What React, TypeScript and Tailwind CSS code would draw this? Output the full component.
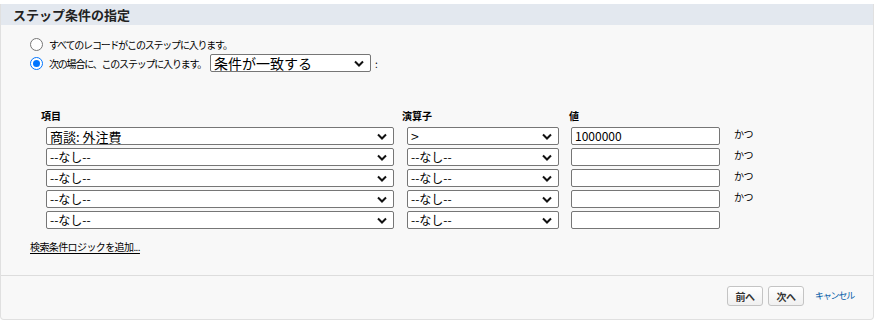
import type { ReactNode } from "react";

const font = { fontFamily: '"Noto Sans CJK JP", "Liberation Sans", sans-serif' };

function Chevron() {
  return (
    <svg width="10" height="7" viewBox="0 0 10 7" className="shrink-0">
      <path d="M1 1.5 L5 5.5 L9 1.5" fill="none" stroke="#111" strokeWidth="2" />
    </svg>
  );
}

function FakeSelect({ value, className, text = "text-[12px]" }: { value: string; className: string; text?: string }) {
  return (
    <div className={`flex items-center justify-between rounded-[2px] border border-[#767676] bg-white pl-[3px] pr-[6px] ${className}`}>
      <span className={`leading-none text-black ${text}`}>{value}</span>
      <Chevron />
    </div>
  );
}

function Radio({ checked, children }: { checked?: boolean; children: ReactNode }) {
  return (
    <div className="flex items-center gap-[6px]">
      {checked ? (
        <span className="flex h-[13px] w-[13px] items-center justify-center rounded-full border border-[#0075ff] bg-white">
          <span className="h-[7px] w-[7px] rounded-full bg-[#0075ff]" />
        </span>
      ) : (
        <span className="h-[13px] w-[13px] rounded-full border border-[#767676] bg-white" />
      )}
      {children}
    </div>
  );
}

const rows = [
  { field: "商談: 外注費", op: ">", value: "1000000", and: true },
  { field: "--なし--", op: "--なし--", value: "", and: true },
  { field: "--なし--", op: "--なし--", value: "", and: true },
  { field: "--なし--", op: "--なし--", value: "", and: true },
  { field: "--なし--", op: "--なし--", value: "", and: false },
];

export default function App() {
  return (
    <div className="h-[327px] w-[877px] bg-white pt-[4px]" style={font}>
      <div className="mr-[3px] h-[316px] rounded-b-[4px] border-r border-b border-l border-[#e0e0e0] bg-[#f8f8f8]">
        <h2 className="h-[21px] bg-[#e3e8ef] pl-[12px] text-[13px] font-bold leading-[21px] text-[#222]">ステップ条件の指定</h2>

        <div className="flex flex-col gap-[2px] pl-[29px] pt-[12px] text-[10px] tracking-[-1.2px] text-black">
          <Radio>すべてのレコードがこのステップに入ります。</Radio>
          <Radio checked>
            <div className="flex items-center gap-[4px]">
              <span>次の場合に、このステップに入ります。</span>
              <FakeSelect value="条件が一致する" className="h-[18px] w-[161px] tracking-normal" text="text-[14px]" />
              <span>:</span>
            </div>
          </Radio>
        </div>

        <div className="pl-[39px] pt-[38px] text-black">
          <div className="flex h-[12px] items-center text-[10px] font-bold leading-[12px]">
            <span className="w-[362px] pl-[1px]">項目</span>
            <span className="w-[167px]">演算子</span>
            <span>値</span>
          </div>
          <div className="mt-[5px] flex flex-col gap-[3px]">
            {rows.map((r, i) => (
              <div key={i} className="flex items-start">
                <FakeSelect value={r.field} className="ml-[6px] h-[18px] w-[348px]" text={i === 0 ? "text-[13px]" : "text-[12px]"} />
                <FakeSelect value={r.op} className="ml-[13px] h-[18px] w-[152px]" text={i === 0 ? "text-[14px]" : "text-[12px]"} />
                <div className="ml-[12px] flex h-[18px] w-[149px] items-center rounded-[2px] border border-[#767676] bg-white pl-[3px] text-[12px] leading-none">
                  {r.value}
                </div>
                {r.and && <span className="ml-[14px] text-[10px] leading-[14px] tracking-[-0.5px]">かつ</span>}
              </div>
            ))}
          </div>
          <div className="mt-[3px]">
            <span className="-ml-[10px] text-[10px] tracking-[-0.6px] underline underline-offset-2">検索条件ロジックを追加...</span>
          </div>
        </div>

        <div className="mt-[19px] flex items-center justify-end gap-[5px] border-t border-[#dddddd] pr-[19px] pt-[10px]">
          <button className="h-[20px] w-[36px] rounded-[3px] border border-[#c4c4c4] bg-gradient-to-b from-white to-[#f0f0f0] text-[10px] font-bold tracking-[-0.5px] text-[#333]">前へ</button>
          <button className="h-[20px] w-[36px] rounded-[3px] border border-[#c4c4c4] bg-gradient-to-b from-white to-[#f0f0f0] text-[10px] font-bold tracking-[-0.5px] text-[#333]">次へ</button>
          <span className="ml-[6px] text-[9px] tracking-[-1.2px] text-[#015ba7]">キャンセル</span>
        </div>
      </div>
    </div>
  );
}
